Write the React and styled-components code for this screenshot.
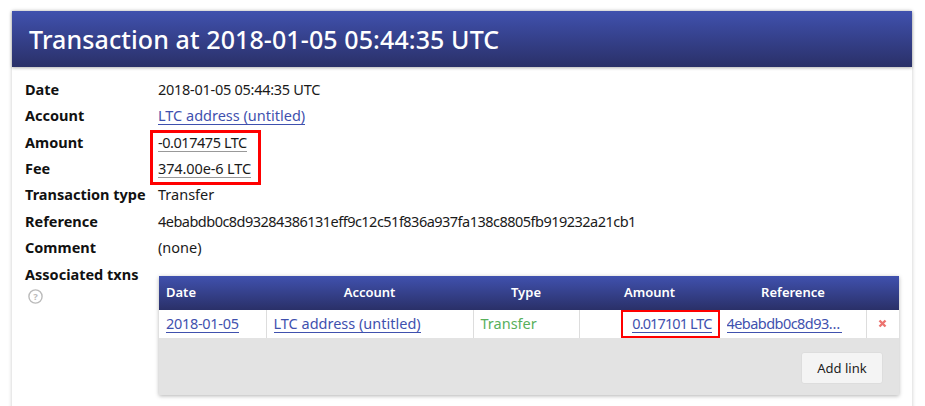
import React from "react";
import styled, { createGlobalStyle } from "styled-components";

const Global = createGlobalStyle`
  html, body { margin: 0; padding: 0; background: #fff; height: 406px; overflow: hidden; }
  body { font-family: "Noto Sans", "Open Sans", sans-serif; font-size: 14.5px; color: #1a1a1a; }
`;
const Page = styled.div`
  padding: 11px 13px 0 12px;
`;
const Panel = styled.section`
  background: #fff;
  box-shadow: 0 0 4px rgba(0,0,0,.22);
  height: 400px;
`;
const Header = styled.h1`
  margin: 0;
  height: 56px;
  padding: 0 17px;
  display: flex;
  align-items: center;
  font-size: 25px;
  font-weight: 500;
  letter-spacing: .1px;
  color: #fff;
  background: linear-gradient(#4051ae, #2a3068);
  box-shadow: 0 1px 3px rgba(0,0,0,.3);
`;
const Details = styled.div`
  padding: 9px 13px 0;
  display: grid;
  grid-template-columns: 133px 1fr;
  grid-auto-rows: 26.3px;
  align-items: center;
  line-height: 26px;
`;
const Label = styled.div`
  font-weight: 700;
  color: #111;
`;
const Value = styled.div`
  position: relative;
  white-space: nowrap;
  letter-spacing: ${(p) => p.$spacing || "normal"};
`;
const Link = styled.a`
  color: #3f51ae;
  text-decoration: none;
  border-bottom: 1px solid #3f51ae;
  line-height: 18px;
  display: inline-block;
  letter-spacing: ${(p) => p.$spacing || "normal"};
`;
const Amount = styled.a`
  color: #1a1a1a;
  text-decoration: none;
  border-bottom: 1px solid #999;
  line-height: 18px;
  display: inline-block;
`;
const RedBox = styled.div`
  position: absolute;
  left: -8px;
  top: 1px;
  width: 105px;
  height: 49px;
  border: 3px solid #f00;
  pointer-events: none;
  letter-spacing: normal;
`;
const LabelStack = styled.div`
  display: flex;
  flex-direction: column;
  align-self: start;
  grid-row: span 2;
  padding-top: 1px;
`;
const Help = styled.svg`
  margin: 2px 0 0 3px;
  width: 15px;
  height: 15px;
`;
const TableWrap = styled.div`
  margin: 16px 0 0 1px;
  width: 740px;
  align-self: start;
  box-shadow: 0 1px 4px rgba(0,0,0,.3);
  line-height: normal;
`;
const Table = styled.table`
  width: 100%;
  border-collapse: collapse;
  table-layout: fixed;
`;
const Th = styled.th`
  height: 32px;
  padding: 0 0 2px;
  font-size: 13px;
  font-weight: 600;
  color: #fff;
  text-align: ${(p) => p.$align || "center"};
  padding-left: ${(p) => (p.$align ? "7px" : 0)};
  background: linear-gradient(#4051ae, #2a3068);
`;
const Td = styled.td`
  position: relative;
  height: 26px;
  padding: 0 ${(p) => (p.$align === "right" ? "8px" : "7px")} 2px ${(p) => (p.$noBorder ? "6px" : "7px")};
  background: #fff;
  border-left: ${(p) => (p.$first ? "none" : "1px solid #ddd")};
  border-left-color: ${(p) => (p.$noBorder ? "transparent" : "#ddd")};
  white-space: nowrap;
  text-align: ${(p) => p.$align || "left"};
  color: ${(p) => p.$color || "inherit"};
  box-shadow: 0 1px 2px rgba(0,0,0,.2);
`;
const Truncated = styled(Link)`
  display: inline-block;
  width: 115px;
  overflow: hidden;
  text-overflow: ellipsis;
  vertical-align: bottom;
`;
const AmountBox = styled.div`
  position: absolute;
  left: 41px;
  right: 0;
  top: 0;
  bottom: 0;
  border: 2px solid #f00;
  pointer-events: none;
`;
const Remove = styled.svg`
  display: block;
  margin: 0 auto;
  width: 9px;
  height: 9px;
`;
const Footer = styled.div`
  height: 57px;
  background: #e3e3e3;
  display: flex;
  justify-content: flex-end;
  align-items: flex-start;
  padding: 14px 16px 0 0;
  box-sizing: border-box;
`;
const Button = styled.button`
  width: 82px;
  height: 32px;
  font: inherit;
  font-size: 13px;
  color: #222;
  background: #f4f4f4;
  border: 1px solid #ddd;
  border-radius: 3px;
  padding: 0;
`;

export default function App() {
  return (
    <Page>
      <Global />
      <Panel>
        <Header>Transaction at 2018-01-05 05:44:35 UTC</Header>
        <Details>
          <Label>Date</Label>
          <Value $spacing="-.27px">2018-01-05 05:44:35 UTC</Value>
          <Label>Account</Label>
          <Value $spacing="-.05px"><Link href="#">LTC address (untitled)</Link></Value>
          <Label>Amount</Label>
          <Value $spacing="-.45px">
            <Amount href="#">-0.017475 LTC</Amount>
            <RedBox />
          </Value>
          <Label>Fee</Label>
          <Value $spacing="-.12px"><Amount href="#">374.00e-6 LTC</Amount></Value>
          <Label>Transaction type</Label>
          <Value>Transfer</Value>
          <Label>Reference</Label>
          <Value $spacing="-.52px">4ebabdb0c8d93284386131eff9c12c51f836a937fa138c8805fb919232a21cb1</Value>
          <Label>Comment</Label>
          <Value>(none)</Value>
          <LabelStack>
            <Label>Associated txns</Label>
            <Help viewBox="0 0 15 15" aria-hidden="true">
              <circle cx="7.5" cy="7.5" r="6.6" fill="none" stroke="#bbb" strokeWidth="1.4" />
              <text x="7.5" y="11" textAnchor="middle" fontSize="9.5" fontWeight="700" fill="#bbb">?</text>
            </Help>
          </LabelStack>
          <TableWrap>
            <Table>
              <colgroup>
                <col style={{ width: 107 }} />
                <col style={{ width: 207 }} />
                <col style={{ width: 106 }} />
                <col style={{ width: 141 }} />
                <col style={{ width: 146 }} />
                <col style={{ width: 33 }} />
              </colgroup>
              <thead>
                <tr>
                  <Th $align="left">Date</Th>
                  <Th>Account</Th>
                  <Th>Type</Th>
                  <Th>Amount</Th>
                  <Th>Reference</Th>
                  <Th />
                </tr>
              </thead>
              <tbody>
                <tr>
                  <Td $first><Link href="#" $spacing="-.3px">2018-01-05</Link></Td>
                  <Td><Link href="#">LTC address (untitled)</Link></Td>
                  <Td $color="#58b05c">Transfer</Td>
                  <Td $align="right">
                    <Link href="#" $spacing="-.9px">0.017101 LTC</Link>
                    <AmountBox />
                  </Td>
                  <Td $noBorder><Truncated href="#" $spacing="-.55px">4ebabdb0c8d93284386131eff9c12c51f836a937</Truncated></Td>
                  <Td $align="center">
                    <Remove viewBox="0 0 9 9" aria-hidden="true">
                      <path d="M1.5 1.5 7.5 7.5M7.5 1.5 1.5 7.5" stroke="#ec7470" strokeWidth="2.4" />
                    </Remove>
                  </Td>
                </tr>
              </tbody>
            </Table>
            <Footer><Button>Add link</Button></Footer>
          </TableWrap>
        </Details>
      </Panel>
    </Page>
  );
}
